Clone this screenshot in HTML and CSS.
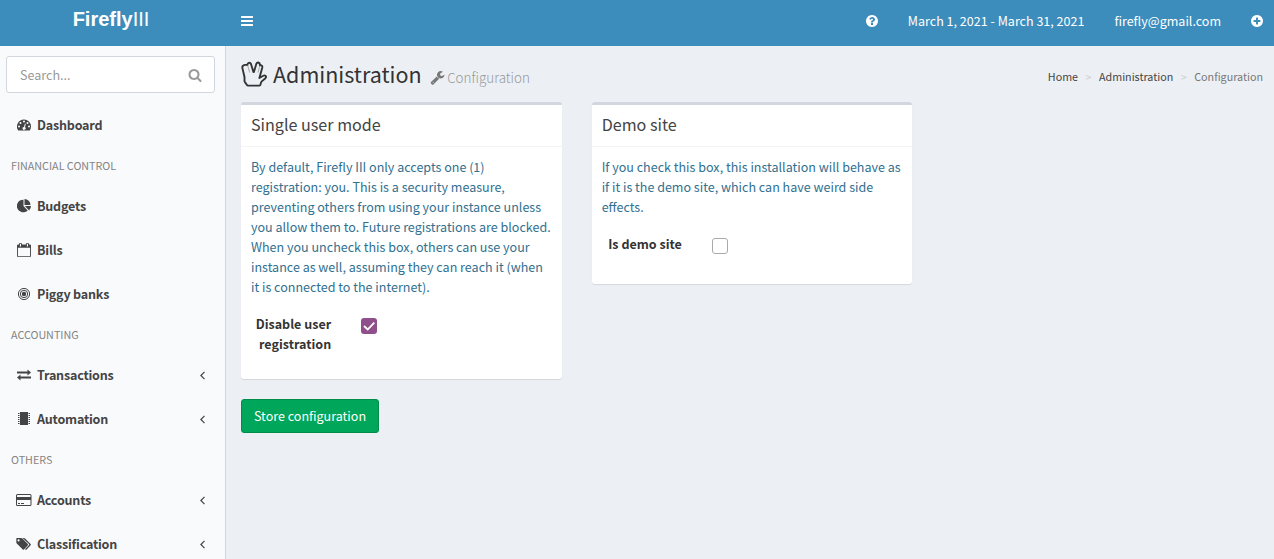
FILE: index.html
```html
<!DOCTYPE html>
<html lang="en">
<head>
<meta charset="utf-8">
<title>Configuration - Administration - Firefly III</title>
<link rel="stylesheet" href="styles.css">
</head>
<body>
<header class="topbar">
  <a class="logo"><b>Firefly</b>III</a>
  <nav class="navbar">
    <svg class="icon bars" viewBox="0 0 12 14"><path d="M0 2.500q0-.5.5-.5h11q.5 0 .5.500v1q0 .5-.5.500h-11q-.5 0-.5-.5zM0 6.500q0-.5.5-.5h11q.5 0 .5.500v1q0 .5-.5.500h-11q-.5 0-.5-.5zM0 10.500q0-.5.5-.5h11q.5 0 .5.500v1q0 .5-.5.500h-11q-.5 0-.5-.5z"/></svg>
    <span class="nav-help"><svg class="icon" viewBox="0 0 1792 1792"><path d="M1024 1376v-192q0-14-9-23t-23-9h-192q-14 0-23 9t-9 23v192q0 14 9 23t23 9h192q14 0 23-9t9-23zm256-672q0-88-55.500-163t-138.500-116-170-41q-243 0-371 213-15 24 8 42l132 100q7 6 19 6 16 0 25-12 53-68 86-92 34-24 86-24 48 0 85.500 26t37.500 59q0 38-20 61t-68 45q-63 28-115.500 86.500t-52.500 125.500v36q0 14 9 23t23 9h192q14 0 23-9t9-23q0-19 21.500-49.500t54.500-49.500q32-18 49-28.500t46-35 44.500-48 28-60.500 12.500-81zm384 192q0 209-103 385.500t-279.500 279.500-385.500 103-385.500-103-279.500-279.500-103-385.500 103-385.500 279.500-279.500 385.500-103 385.500 103 279.500 279.500 103 385.500z"/></svg></span>
    <span class="nav-date">March 1, 2021 - March 31, 2021</span>
    <span class="nav-mail">firefly@gmail.com</span>
    <svg class="icon" viewBox="0 0 1792 1792"><path d="M1344 960v-128q0-26-19-45t-45-19h-256v-256q0-26-19-45t-45-19h-128q-26 0-45 19t-19 45v256h-256q-26 0-45 19t-19 45v128q0 26 19 45t45 19h256v256q0 26 19 45t45 19h128q26 0 45-19t19-45v-256h256q26 0 45-19t19-45zm320-64q0 209-103 385.500t-279.500 279.500-385.500 103-385.500-103-279.500-279.500-103-385.500 103-385.500 279.500-279.500 385.500-103 385.500 103 279.500 279.500 103 385.500z"/></svg>
  </nav>
</header>
<div class="wrapper">
  <aside class="sidebar">
    <div class="search"><span>Search...</span><svg class="icon" viewBox="0 0 1792 1792"><path d="M1216 832q0-185-131.500-316.500t-316.500-131.500-316.500 131.500-131.500 316.500 131.500 316.500 316.500 131.500 316.500-131.500 131.500-316.500zm512 832q0 52-38 90t-90 38q-54 0-90-38l-343-342q-179 124-399 124-143 0-273.500-55.500t-225-150-150-225-55.500-273.500 55.500-273.500 150-225 225-150 273.500-55.500 273.500 55.500 225 150 150 225 55.500 273.500q0 220-124 399l343 343q37 37 37 90z"/></svg></div>
    <ul class="menu">
      <li class="item"><svg class="icon" viewBox="0 0 14 14"><path fill-rule="evenodd" d="M7 1.500a7 7 0 0 1 7 7c0 1.400-.4 2.700-1.100 3.800q-.2.200-.4.200h-11q-.3 0-.4-.2A7 7 0 0 1 7 1.500zM2 7.500a1 1 0 1 0 0 2 1 1 0 0 0 0-2zM3.500 4a1 1 0 1 0 0 2 1 1 0 0 0 0-2zM7 2.500a1 1 0 1 0 0 2 1 1 0 0 0 0-2zM10.500 4a1 1 0 1 0 0 2 1 1 0 0 0 0-2zM12 7.500a1 1 0 1 0 0 2 1 1 0 0 0 0-2zM8.300 5.600q-.4-.1-.5.300l-.8 3a1.500 1.500 0 1 0 1 .3l.7-3q.1-.5-.4-.6z"/></svg><span>Dashboard</span></li>
      <li class="heading">FINANCIAL CONTROL</li>
      <li class="item"><svg class="icon" viewBox="0 0 14 14"><path d="M6.500 7l4.200 4.400A6.300 6.300 0 1 1 6.500.7zM7.800 7H14a6.300 6.300 0 0 1-1.900 4.400zM13.500 6H7.500V0a6 6 0 0 1 6 6z"/></svg><span>Budgets</span></li>
      <li class="item"><svg class="icon" viewBox="0 0 14 14"><path fill-rule="evenodd" d="M.9 13.200h12.200V4.800H.9zM4 3.300V1q0-.3-.3-.3h-.5q-.3 0-.3.300v2.300q0 .2.300.200h.5q.3 0 .3-.2zm7 0V1q0-.3-.3-.3h-.5q-.3 0-.3.300v2.300q0 .2.300.200h.5q.3 0 .3-.2zM14 2.500V13q0 1-1 1H1q-1 0-1-1V2.500q0-1 1-1h1V1q0-1 1-1h.8Q5 0 5 1v.5h4V1q0-1 1-1h.8Q12 0 12 1v.5h1q1 0 1 1z"/></svg><span>Bills</span></li>
      <li class="item"><svg class="icon" viewBox="0 0 14 14"><g fill="none" stroke="currentColor"><circle cx="7" cy="7" r="5.600" stroke-width="1"/><circle cx="7" cy="7" r="3.700" stroke-width="1"/></g><circle cx="7" cy="7" r="2.200"/></svg><span>Piggy banks</span></li>
      <li class="heading">ACCOUNTING</li>
      <li class="item"><svg class="icon" viewBox="0 0 14 14"><path d="M0 4h10.500V2l3.500 3-3.500 3V6H0zM14 11H3.500v2L0 10l3.500-3v2H14z" transform="translate(0 -.5)"/></svg><span>Transactions</span><svg class="caret" viewBox="0 0 5 9"><path d="M4.500.8L.9 4.500l3.600 3.700"/></svg></li>
      <li class="item"><svg class="icon" viewBox="0 0 14 14"><path d="M3 0h8v13H3zM1 1h1.500v1H1zm0 2h1.500v1H1zm0 2h1.500v1H1zm0 2h1.500v1H1zm0 2h1.500v1H1zm0 2h1.500v1H1zM11.500 1H13v1h-1.500zm0 2H13v1h-1.500zm0 2H13v1h-1.500zm0 2H13v1h-1.500zm0 2H13v1h-1.500zm0 2H13v1h-1.500z"/></svg><span>Automation</span><svg class="caret" viewBox="0 0 5 9"><path d="M4.500.8L.9 4.500l3.600 3.700"/></svg></li>
      <li class="heading">OTHERS</li>
      <li class="item"><svg class="icon wide" viewBox="0 0 16 14"><path fill-rule="evenodd" d="M1.500 1h12.500q1.500 0 1.500 1.500v9q0 1.500-1.500 1.500H1.500Q0 13 0 11.500v-9Q0 1 1.500 1zm0 1q-.5 0-.5.500V4h13.500V2.500q0-.5-.5-.5zM1 7v4.500q0 .5.500.500H14q.5 0 .5-.5V7zm1 3h2v1H2zm3 0h3v1H5z"/></svg><span>Accounts</span><svg class="caret" viewBox="0 0 5 9"><path d="M4.500.8L.9 4.500l3.600 3.700"/></svg></li>
      <li class="item"><svg class="icon wide" viewBox="0 0 16 14"><path fill-rule="evenodd" d="M1 1h4.200q.6 0 1.200.5l5.400 5.400q.6.600 0 1.300L8 12.500q-.6.500-1.200 0L1 6.800Q.3 6.100.3 5.500V1.800Q.3 1 1 1zm1.600 1.300a1.100 1.100 0 1 0 0 2.200 1.100 1.100 0 0 0 0-2.200z"/><path d="M6.500 1h1.300q.7 0 1.300.5l5.500 5.400q.7.600 0 1.300l-4 4.200q-.6.600-1.300.2l-.4-.4L13 7.900q.4-.4 0-.8z"/></svg><span>Classification</span><svg class="caret" viewBox="0 0 5 9"><path d="M4.500.8L.9 4.500l3.600 3.700"/></svg></li>
    </ul>
  </aside>
  <main class="content">
    <div class="page-head">
      <svg class="hand" viewBox="0 0 26 26"><path d="M7 24.600h11.300q1 0 1.200-1 .3-2.500 1.600-3.500l3.300-2.900q1.200-1.300.2-2.300-1-1-2.400-.1L18.400 17l2.900-10.600q.3-1.700-1.100-2.100l-1.300.1q.2-2.600-1.600-2.900-1.500-.1-2 1.400L12.900 11h-.5L10 3Q9.300 1.500 7.800 1.900 6.300 2.300 6.500 4L4.700 3.900Q3 3.700 2 4.800q-1 .9-.6 2.300L3.500 16v4q0 .8.600 1.400l1.700 2.300q.5.900 1.200.9z"/><path class="crease" d="M6.500 4l2.200 7.500M18.900 4.400L17 11.500"/></svg>
      <h1>Administration</h1>
      <svg class="icon wrench" viewBox="0 0 1792 1792"><path d="M448 1472q0-26-19-45t-45-19-45 19-19 45 19 45 45 19 45-19 19-45zm644-420l-682 682q-37 37-90 37-52 0-91-37l-106-108q-38-36-38-90 0-53 38-91l681-681q39 98 114.500 173.500t173.500 114.500zm634-435q0 39-23 106-47 134-164.500 217.500t-258.500 83.500q-185 0-316.500-131.500t-131.500-316.500 131.500-316.500 316.500-131.500q58 0 121.500 16.500t107.500 46.500q16 11 16 28t-16 28l-293 169v224l193 107q5-3 79-48.500t135.500-81 70.500-35.500q15 0 23.500 10t8.500 25z"/></svg>
      <small>Configuration</small>
      <nav class="crumbs"><span>Home</span><i>&gt;</i><span>Administration</span><i>&gt;</i><span class="active">Configuration</span></nav>
    </div>
    <div class="boxes">
      <section class="box">
        <h3>Single user mode</h3>
        <div class="box-body">
          <p>By default, Firefly III only accepts one (1)<br>registration: you. This is a security measure,<br>preventing others from using your instance unless<br>you allow them to. Future registrations are blocked.<br>When you uncheck this box, others can use your<br>instance as well, assuming they can reach it (when<br>it is connected to the internet).</p>
          <div class="field"><label>Disable user<br>registration</label><span class="check on"><svg viewBox="0 0 16 16"><path d="M3 8l3.700 3.500 6.600-6.900"/></svg></span></div>
        </div>
      </section>
      <section class="box">
        <h3>Demo site</h3>
        <div class="box-body">
          <p>If you check this box, this installation will behave as<br>if it is the demo site, which can have weird side<br>effects.</p>
          <div class="field"><label>Is demo site</label><span class="check"></span></div>
        </div>
      </section>
    </div>
    <button class="store">Store configuration</button>
  </main>
</div>
</body>
</html>
```
FILE: styles.css
```css
* { box-sizing: border-box; }
body {
  margin: 0;
  height: 559px;
  overflow: hidden;
  font-family: "Noto Sans CJK SC", "Noto Sans", sans-serif;
  font-size: 12.540px;
  line-height: 20px;
  color: #333;
  background: #ecf0f5;
}
.icon { width: 14px; height: 14px; flex: none; fill: currentColor; }
.topbar { display: flex; height: 46px; background: #3c8dbc; color: #fff; }
.logo {
  width: 225px;
  padding-right: 3px;
  font: 300 20px/38px "Liberation Sans", Arial, sans-serif;
  text-align: center;
}
.logo b { font-weight: 700; }
.navbar { flex: 1; display: flex; align-items: center; padding: 0 10px 4px 16px; }
.bars { width: 12px; }
.nav-help { display: flex; margin-left: auto; }
.nav-date { margin-left: 29px; }
.nav-mail { margin: 0 29px 0 30px; }
.wrapper { display: flex; height: 513px; }
.sidebar {
  width: 226px;
  flex: none;
  overflow: hidden;
  background: #f9fafc;
  border-right: 1px solid #d2d6de;
}
.search {
  display: flex;
  align-items: center;
  justify-content: space-between;
  width: 209px;
  height: 37px;
  margin: 10px 0 10px 6px;
  padding: 0 12.500px 0 13px;
  border: 1px solid #d2d6de;
  border-radius: 3px;
  background: #fff;
  color: #999;
}
.menu { margin: 0; padding: 0; list-style: none; }
.item {
  display: flex;
  align-items: center;
  height: 44px;
  padding: 0 20px 0 17px;
  color: #444;
  font-weight: 600;
}
.item > span { margin-left: 6px; letter-spacing: -.2px; }
.item .wide { width: 16px; margin: 0 -1px; }
.caret { width: 5px; height: 9px; margin-left: auto; fill: none; stroke: #444; stroke-width: 1.200; }
.heading { height: 37px; padding: 9px 11px; color: #848484; font-size: 10.740px; }
.content { flex: 1; padding: 0 11px 0 15px; }
.page-head { display: flex; align-items: center; height: 56px; }
.hand { width: 26px; height: 26px; fill: none; stroke: #333; stroke-width: 1.900; stroke-linejoin: round; }
.hand .crease { stroke-width: .7; stroke: #888; }
h1 { margin: 0 8px 0 6px; font-size: 21.510px; font-weight: 400; line-height: 26px; }
.wrench { width: 15px; height: 15px; color: #777; margin-top: 6px; }
small { margin: 5px 0 0 2.500px; color: #999; font-size: 13.430px; font-weight: 300; }
.crumbs { display: flex; margin: 5px 0 0 auto; color: #444; font-size: 10.740px; }
.crumbs i { width: 21px; color: #ccc; font-style: normal; text-align: center; }
.crumbs .active { color: #777; }
.boxes { display: flex; align-items: flex-start; gap: 30px; }
.box {
  width: 320.660px;
  min-height: 182px;
  border-top: 3px solid #d2d6de;
  border-radius: 3px;
  background: #fff;
  box-shadow: 0 1px 1px rgba(0, 0, 0, .1);
}
h3 {
  height: 42px;
  margin: 0;
  padding: 9px 10px;
  border-bottom: 1px solid #f4f4f4;
  color: #444;
  font-size: 16.110px;
  font-weight: 400;
  line-height: 20px;
}
.box-body { padding: 10px 10px 25px; }
p { margin: 0 0 17px; color: #31708f; white-space: nowrap; }
.field { display: flex; }
label { width: 80.200px; font-weight: 700; text-align: right; }
.check { width: 16px; height: 16px; margin: 4px 0 0 29.800px; border: 1px solid #aaa; border-radius: 3px; }
.check.on { border: 0; background: #8f4f8b; }
.check svg { display: block; fill: none; stroke: #fff; stroke-width: 1.800; }
.store {
  display: block;
  width: 138px;
  height: 34px;
  margin-top: 20px;
  padding: 0;
  border: 1px solid #008d4c;
  border-radius: 3px;
  background: #00a65a;
  color: #fff;
  font: inherit;
}
```
